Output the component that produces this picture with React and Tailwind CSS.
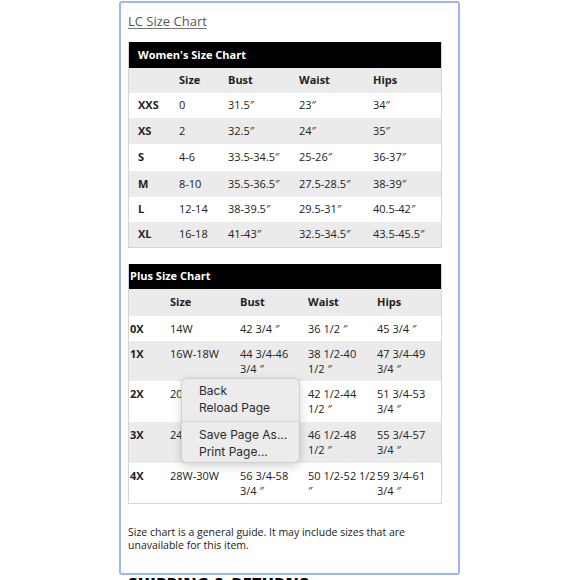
import React from "react";

const women = [
  ["XXS", "0", "31.5\u2033", "23\u2033", "34\u2033"],
  ["XS", "2", "32.5\u2033", "24\u2033", "35\u2033"],
  ["S", "4-6", "33.5-34.5\u2033", "25-26\u2033", "36-37\u2033"],
  ["M", "8-10", "35.5-36.5\u2033", "27.5-28.5\u2033", "38-39\u2033"],
  ["L", "12-14", "38-39.5\u2033", "29.5-31\u2033", "40.5-42\u2033"],
  ["XL", "16-18", "41-43\u2033", "32.5-34.5\u2033", "43.5-45.5\u2033"],
];

const plus = [
  ["0X", "14W", "42 3/4 \u2033", "36 1/2 \u2033", "45 3/4 \u2033", "h-[25px]"],
  ["1X", "16W-18W", "44 3/4-46\n3/4 \u2033", "38 1/2-40\n1/2 \u2033", "47 3/4-49\n3/4 \u2033", "h-[40px]"],
  ["2X", "20W-22W", "48 3/4-50\n3/4 \u2033", "42 1/2-44\n1/2 \u2033", "51 3/4-53\n3/4 \u2033", "h-[41px]"],
  ["3X", "24W-26W", "52 3/4-54\n3/4 \u2033", "46 1/2-48\n1/2 \u2033", "55 3/4-57\n3/4 \u2033", "h-[41px]"],
  ["4X", "28W-30W", "56 3/4-58\n3/4 \u2033", "50 1/2-52 1/2\n\u2033", "59 3/4-61\n3/4 \u2033", "h-[40px]"],
];

const wH = ["h-[25px]", "h-[26px]", "h-[27px]", "h-[26px]", "h-[25px]", "h-[25px]"];

export default function App() {
  return (
    <div
      className="w-[580px] h-[580px] bg-white overflow-hidden relative text-[#222]"
      style={{ fontFamily: "'Open Sans', 'Noto Sans', sans-serif" }}
    >
      <div className="ml-[119px] mt-[1px] w-[341px] h-[574px] border-2 border-[#9cb8ec] rounded-[3px] px-[7px] pt-[9px]">
        <div className="text-[13px] leading-[18px] text-[#555] underline underline-offset-2 decoration-[#777]">
          LC Size Chart
        </div>

        {/* Women's table */}
        <div className="mt-[12px] w-[314px] border border-[#d4d4d4] border-t-0">
          <div className="h-[26px] bg-black text-white font-bold text-[11px] flex items-center pl-[9px]">
            Women's Size Chart
          </div>
          <div className="h-[25px] bg-[#ebebeb] flex items-center pl-[9px] text-[11px] font-bold">
            <div className="w-[41px]"></div>
            <div className="w-[49px]">Size</div>
            <div className="w-[71px]">Bust</div>
            <div className="w-[74px]">Waist</div>
            <div className="flex-1">Hips</div>
          </div>
          {women.map((r, i) => (
            <div
              key={r[0]}
              className={`${wH[i]} ${i % 2 ? "bg-[#ebebeb]" : "bg-white"} flex items-center pl-[9px] text-[11px]`}
            >
              <div className="w-[41px] font-bold">{r[0]}</div>
              <div className="w-[49px]">{r[1]}</div>
              <div className="w-[71px]">{r[2]}</div>
              <div className="w-[74px]">{r[3]}</div>
              <div className="flex-1">{r[4]}</div>
            </div>
          ))}
        </div>

        {/* Plus table */}
        <div className="mt-[16px] w-[314px] border border-[#d4d4d4] border-t-0">
          <div className="h-[25px] bg-black text-white font-bold text-[11px] flex items-center pl-[1px]">
            Plus Size Chart
          </div>
          <div className="h-[27px] bg-[#ebebeb] flex items-center pl-[1px] text-[11px] font-bold">
            <div className="w-[40px]"></div>
            <div className="w-[70px]">Size</div>
            <div className="w-[68px]">Bust</div>
            <div className="w-[69px]">Waist</div>
            <div className="flex-1">Hips</div>
          </div>
          {plus.map((r, i) => (
            <div
              key={r[0]}
              className={`${r[5]} ${i % 2 ? "bg-[#ebebeb]" : "bg-white"} flex items-start pt-[5px] pl-[1px] text-[11px] leading-[15px] whitespace-pre-line`}
            >
              <div className="w-[40px] font-bold">{r[0]}</div>
              <div className="w-[70px]">{r[1]}</div>
              <div className="w-[68px]">{r[2]}</div>
              <div className="w-[69px]">{r[3]}</div>
              <div className="flex-1">{r[4]}</div>
            </div>
          ))}
        </div>

        <div className="mt-[22px] text-[10.5px] leading-[13px] text-[#222] w-[300px]">
          Size chart is a general guide. It may include sizes that are unavailable for this item.
        </div>
      </div>

      <div className="ml-[128px] text-[16px] font-extrabold tracking-wide text-black leading-none">
        SHIPPING &amp; RETURNS
      </div>

      {/* Context menu */}
      <div
        className="absolute left-[181px] top-[378px] w-[119px] h-[85px] rounded-[6px] bg-[#ececec] border border-[#cfcfcf] shadow-[0_3px_10px_rgba(0,0,0,0.18)] pt-[4px] text-[12px] leading-[16.5px] text-[#2a2a2a]"
        style={{ fontFamily: "Inter, 'Liberation Sans', sans-serif" }}
      >
        <div className="pl-[17px]">Back</div>
        <div className="pl-[17px]">Reload Page</div>
        <div className="my-[5px] h-px bg-[#d2d2d2]"></div>
        <div className="pl-[17px]">Save Page As...</div>
        <div className="pl-[17px]">Print Page...</div>
      </div>
    </div>
  );
}
